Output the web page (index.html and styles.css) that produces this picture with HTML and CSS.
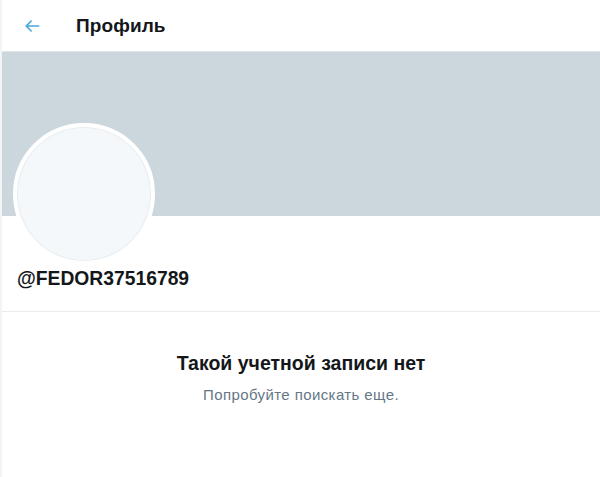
FILE: index.html
```html
<!DOCTYPE html>
<html lang="ru">
<head>
<meta charset="utf-8">
<link rel="stylesheet" href="styles.css">
</head>
<body>
<div class="page">
  <header class="topbar">
    <div class="back">
      <svg viewBox="0 0 24 24" width="20" height="20"><path d="M20 11H7.414l4.293-4.293a1 1 0 0 0-1.414-1.414l-6 6a1 1 0 0 0 0 1.414l6 6a1 1 0 0 0 1.414-1.414L7.414 13H20a1 1 0 0 0 0-2z" fill="#4aa8e0"/></svg>
    </div>
    <h1 class="title">Профиль</h1>
  </header>
  <div class="banner"></div>
  <div class="profile">
    <div class="avatar"></div>
    <div class="handle">@FEDOR37516789</div>
  </div>
  <div class="empty">
    <div class="empty-title">Такой учетной записи нет</div>
    <div class="empty-sub">Попробуйте поискать еще.</div>
  </div>
</div>
</body>
</html>
```
FILE: styles.css
```css
* { box-sizing: border-box; }
html, body { margin: 0; padding: 0; background: #fff; }
body { font-family: "Liberation Sans", Arial, sans-serif; color: #14171a; }
.page {
  width: 600px;
  height: 477px;
  border-left: 2px solid #f2f4f6;
  overflow: hidden;
}
.topbar {
  height: 52px;
  display: flex;
  align-items: center;
  border-bottom: 1px solid #dfe4e8;
}
.back {
  width: 74px;
  padding-left: 20px;
  display: flex;
  align-items: center;
  height: 20px;
}
.back svg { display: block; }
.title {
  margin: 0;
  font-size: 19px;
  font-weight: 700;
  letter-spacing: 0.1px;
}
.banner {
  height: 164px;
  background: #ccd6dd;
}
.profile {
  height: 96px;
  padding-left: 11px;
  border-bottom: 1px solid #e6ecf0;
  position: relative;
}
.avatar {
  position: absolute;
  left: 11px;
  top: -93px;
  width: 142px;
  height: 142px;
  border-radius: 50%;
  background: #f5f8fa;
  border: 4px solid #fff;
  box-shadow: 0 0 0 1px #e6ecf0 inset;
}
.handle {
  padding-top: 52px;
  padding-left: 4px;
  font-size: 19.3px;
  font-weight: 700;
  line-height: 22px;
}
.empty {
  padding-top: 39px;
  text-align: center;
}
.empty-title {
  font-size: 19.5px;
  font-weight: 700;
  line-height: 24px;
}
.empty-sub {
  margin-top: 11px;
  font-size: 15px;
  letter-spacing: 0.4px;
  color: #657786;
  line-height: 18px;
}
```
